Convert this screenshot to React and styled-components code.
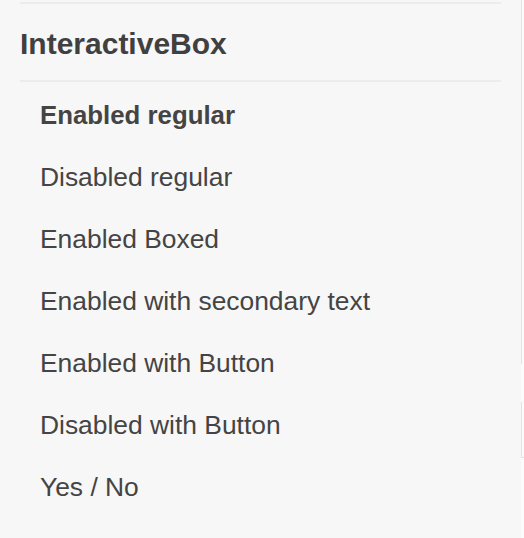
import React from "react";
import styled, { createGlobalStyle } from "styled-components";

const GlobalStyle = createGlobalStyle`
  html, body {
    margin: 0;
    padding: 0;
    background: #f7f7f7;
  }
  body {
    font-family: "Liberation Sans", Arial, sans-serif;
    color: #444;
  }
`;

const items = [
  { label: "Enabled regular", bold: true },
  { label: "Disabled regular" },
  { label: "Enabled Boxed" },
  { label: "Enabled with secondary text" },
  { label: "Enabled with Button" },
  { label: "Disabled with Button" },
  { label: "Yes / No" },
];

function App() {
  return (
    <Page>
      <GlobalStyle />
      <Panel>
        <Section>
          <Title>InteractiveBox</Title>
          <List>
            {items.map((item) => (
              <Item key={item.label} $bold={item.bold}>
                {item.label}
              </Item>
            ))}
          </List>
        </Section>
      </Panel>
      <Edge>
        <EdgeSegment $h={364} $line />
        <EdgeSegment $h={38} />
        <EdgeSegment $h={55} $line />
        <EdgeTick />
      </Edge>
    </Page>
  );
}

export default App;

const Page = styled.div`
  display: flex;
  min-height: 538px;
  background: #f7f7f7;
`;

const Panel = styled.div`
  flex: 1;
  padding: 0 20px;
`;

const Section = styled.div`
  border-top: 2px solid #ececec;
  margin-top: 2px;
`;

const Title = styled.h2`
  margin: 0;
  padding: 23px 0 19px;
  font-size: 30px;
  line-height: 34px;
  font-weight: 700;
  color: #404040;
  border-bottom: 2px solid #ececec;
`;

const List = styled.ul`
  list-style: none;
  margin: 0;
  padding: 2px 0 0 20px;
`;

const Item = styled.li`
  font-size: ${(p) => (p.$bold ? "25.8px" : "26.4px")};
  line-height: 62px;
  font-weight: ${(p) => (p.$bold ? 700 : 400)};
  color: #444;
`;

const Edge = styled.div`
  width: 3px;
  display: flex;
  flex-direction: column;
  background: #fbfbfb;
`;

const EdgeSegment = styled.div`
  height: ${(p) => p.$h}px;
  border-left: 1px solid ${(p) => (p.$line ? "#e3e3e3" : "transparent")};
`;

const EdgeTick = styled.div`
  height: 1px;
  background: #e3e3e3;
`;
